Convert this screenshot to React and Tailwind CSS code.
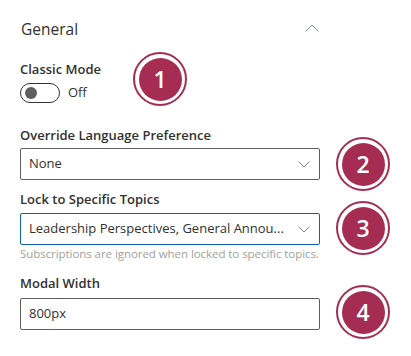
import React from "react";

function Badge({ n, className }) {
  return (
    <div
      className={
        "absolute w-[54px] h-[54px] rounded-full border-[2.5px] border-[#a52d53] bg-white flex items-center justify-center " +
        className
      }
    >
      <div className="w-[43px] h-[43px] rounded-full bg-[#a52d53] flex items-center justify-center text-white text-[23px] font-semibold leading-none">
        {n}
      </div>
    </div>
  );
}

function Chevron({ up, color = "#8a8886", w = 12 }) {
  return (
    <svg width={w} height={w / 2 + 1} viewBox={`0 0 ${w} ${w / 2 + 1}`} fill="none">
      <path
        d={up ? `M0.5 ${w / 2 + 0.5} L${w / 2} 1 L${w - 0.5} ${w / 2 + 0.5}` : `M0.5 0.5 L${w / 2} ${w / 2} L${w - 0.5} 0.5`}
        stroke={color}
        strokeWidth="1"
      />
    </svg>
  );
}

export default function App() {
  return (
    <div
      className="relative w-[411px] h-[356px] bg-white text-[#323130]"
      style={{ fontFamily: "'Open Sans', 'Noto Sans', sans-serif" }}
    >
      <div className="pl-[20px] w-[320px]">
        <div className="h-[58px] flex items-center justify-between pt-[1px]">
          <span className="text-[15.5px] ml-[1px]">General</span>
          <span className="mr-[1px] -mt-[3px]">
            <Chevron up color="#7a93b0" w={14} />
          </span>
        </div>
        <div className="text-[13px] font-semibold leading-[20px] mt-[1px]">Classic Mode</div>
        <div className="flex items-center mt-[4px] h-[20px]">
          <div className="w-[40px] h-[20px] rounded-full border border-[#323130] flex items-center pl-[4px]">
            <div className="w-[12px] h-[12px] rounded-full bg-[#605e5c]" />
          </div>
          <span className="ml-[8px] text-[13px]">Off</span>
        </div>

        <div className="text-[13px] font-semibold leading-[20px] mt-[22px]">
          Override Language Preference
        </div>
        <div className="mt-[3px] h-[32px] border border-[#605e5c] rounded-[2px] flex items-center justify-between pl-[8px] pr-[9px]">
          <span className="text-[13px]">None</span>
          <Chevron />
        </div>

        <div className="text-[13px] font-semibold leading-[20px] mt-[9px]">
          Lock to Specific Topics
        </div>
        <div className="mt-[4px] h-[32px] border border-[#0f64a8] rounded-[2px] flex items-center justify-between pl-[8px] pr-[9px]">
          <span className="text-[13px] whitespace-nowrap">Leadership Perspectives, General Annou...</span>
          <Chevron />
        </div>
        <div className="text-[11.5px] text-[#a19f9d] leading-[18px] whitespace-nowrap tracking-[-0.06px]">
          Subscriptions are ignored when locked to specific topics.
        </div>

        <div className="text-[13px] font-semibold leading-[20px] mt-[10px]">Modal Width</div>
        <div className="mt-[5px] h-[32px] border border-[#605e5c] rounded-[2px] flex items-center pl-[8px]">
          <span className="text-[13px]">800px</span>
        </div>
      </div>

      <Badge n="1" className="left-[133px] top-[52px]" />
      <Badge n="2" className="left-[336px] top-[137px]" />
      <Badge n="3" className="left-[336px] top-[201px]" />
      <Badge n="4" className="left-[336px] top-[285px]" />
    </div>
  );
}
